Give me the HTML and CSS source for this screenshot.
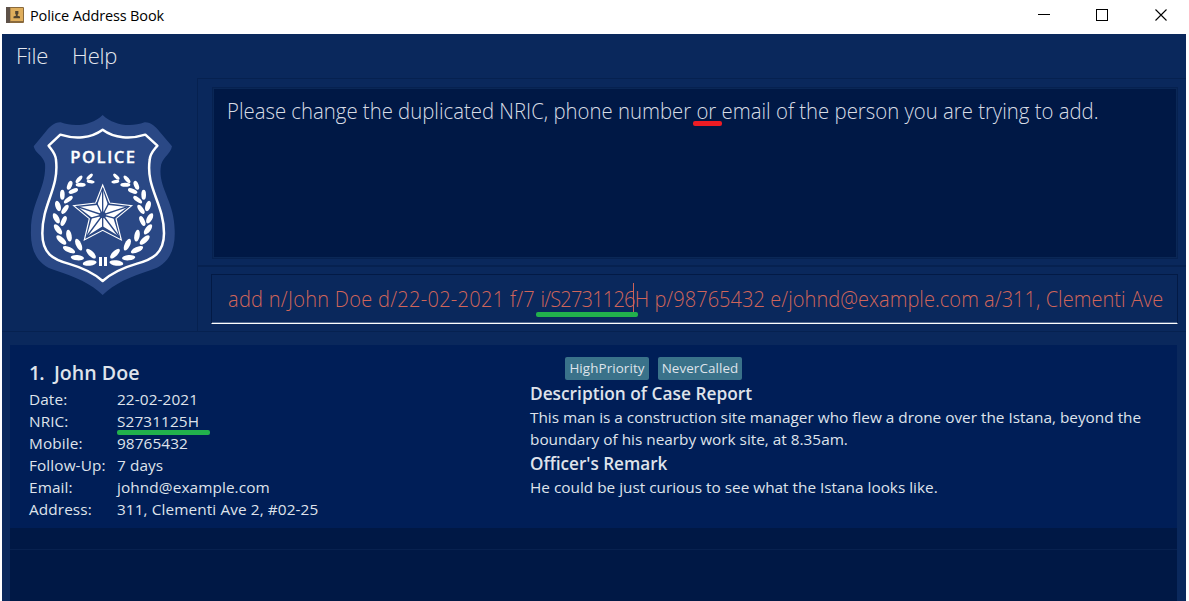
FILE: index.html
```html
<!DOCTYPE html>
<html lang="en">
<head>
<meta charset="utf-8">
<title>Police Address Book</title>
<link rel="stylesheet" href="styles.css">
</head>
<body>
<header class="titlebar">
  <svg class="app-icon" width="18" height="16" viewBox="0 0 18 16">
    <rect x="0" y="0" width="18" height="16" rx="1" fill="#8a6a3c"/>
    <rect x="0" y="0" width="4" height="16" fill="#5d5148"/>
    <rect x="4.5" y="1" width="12.5" height="13" fill="#dfae5c"/>
    <path d="M9.200 4h3.2v2.800l-.8 1v1l2.400.8v1.600H7.500V9.600l2.400-.8v-1l-.7-1z" fill="#51432f"/>
  </svg>
  <span class="title">Police Address Book</span>
  <svg class="controls" width="130" height="14" viewBox="0 0 130 14" fill="none" stroke="#000" shape-rendering="crispEdges">
    <path d="M0 6.500h12"/>
    <rect x="58.500" y="1.500" width="11" height="11"/>
    <path d="M117.500 1.500l11 11M128.500 1.500l-11 11" stroke-width="1.100" shape-rendering="auto"/>
  </svg>
</header>
<main class="window">
  <nav class="menu"><span class="file">File</span><span class="help">Help</span></nav>
  <section class="top">
    <div class="logo">
      <svg width="170" height="200" viewBox="0 0 510 600">
        <path fill="#2a4885" d="M248 30C215 61 165 68 122 52C104 51 88 66 77 80L41 124C46 146 69 151 75 176C80 250 33 290 33 375C30 438 53 480 105 496C165 516 214 536 248 570C282 536 331 516 391 496C444 480 467 438 464 375C463 290 416 250 422 190C422 160 452 149 456 124L419 80C408 66 392 51 374 52C331 68 281 61 248 30Z"/>
        <path fill="none" stroke="#fff" stroke-width="7.500" stroke-linejoin="round" d="M248 74C213 100 165 103 121 89L86 122C95 135 107 145 108 165C118 250 67 295 67 385C67 445 98 463 145 476C190 489 222 505 248 528C274 505 306 489 351 476C398 463 432 445 432 385C432 295 377 250 389 165C390 145 402 135 412 122L376 89C332 103 283 100 248 74Z"/>
        <text class="badge-text" x="248" y="174" text-anchor="middle" textLength="194">POLICE</text>
        <g id="branch" fill="#fff">
          <ellipse cx="209" cy="215" rx="12" ry="5" transform="rotate(-43 209 215)"/>
          <ellipse cx="212" cy="230" rx="12" ry="5" transform="rotate(10 212 230)"/>
          <ellipse cx="177" cy="223" rx="14" ry="6" transform="rotate(-50 177 223)"/>
          <ellipse cx="182" cy="239" rx="15" ry="6" transform="rotate(0 182 239)"/>
          <ellipse cx="149" cy="241" rx="14" ry="7" transform="rotate(-68 149 241)"/>
          <ellipse cx="160" cy="258" rx="15" ry="6.500" transform="rotate(-22 160 258)"/>
          <ellipse cx="127" cy="269" rx="15" ry="7" transform="rotate(-90 127 269)"/>
          <ellipse cx="145" cy="284" rx="16" ry="6.500" transform="rotate(-38 145 284)"/>
          <ellipse cx="114" cy="303" rx="16" ry="8" transform="rotate(72 114 303)"/>
          <ellipse cx="135" cy="313" rx="16" ry="7" transform="rotate(-55 135 313)"/>
          <ellipse cx="109" cy="340" rx="17" ry="8" transform="rotate(62 109 340)"/>
          <ellipse cx="131" cy="348" rx="16" ry="7" transform="rotate(-65 131 348)"/>
          <ellipse cx="114" cy="373" rx="18" ry="8" transform="rotate(53 114 373)"/>
          <ellipse cx="147" cy="392" rx="18" ry="8" transform="rotate(80 147 392)"/>
          <ellipse cx="124" cy="405" rx="19" ry="8" transform="rotate(42 124 405)"/>
          <ellipse cx="147" cy="434" rx="20" ry="8" transform="rotate(25 147 434)"/>
          <ellipse cx="176" cy="419" rx="19" ry="8" transform="rotate(65 176 419)"/>
          <ellipse cx="172" cy="458" rx="20" ry="8" transform="rotate(5 172 458)"/>
          <ellipse cx="213" cy="446" rx="19" ry="8" transform="rotate(45 213 446)"/>
          <ellipse cx="209" cy="474" rx="21" ry="8" transform="rotate(-8 209 474)"/>
          <rect x="237" y="456" width="9" height="27"/>
        </g>
        <use href="#branch" transform="matrix(-1 0 0 1 498 0)"/>
        <path fill="none" stroke="#fff" stroke-width="3.500" d="M248 240L269 294L335 302L288 341L304 405L248 376L193 405L208 341L161 302L227 294Z"/>
        <path fill="#fff" d="M248 253L264 300L322 306L280 338L297 394L248 364L200 394L216 338L174 306L232 300Z"/>
        <path fill="none" stroke="#2a4885" stroke-width="4" d="M248 250V330L325 304M248 330L298 396M248 330L199 396M248 330L170 304M248 330L267 293M248 330L286 340M248 330V370M248 330L210 340M248 330L229 293"/>
        <circle cx="248" cy="330" r="10" fill="#2a4885"/>
      </svg>
    </div>
    <div class="panes">
      <div class="result-pane"><div class="result"><span class="message">Please change the duplicated NRIC, phone number or email of the person you are trying to add.</span></div></div>
      <div class="command-pane"><div class="command"><span class="input"><span class="before">add n/John Doe d/22-02-2021 f/7 </span><span class="nric">i/S2731126</span><span class="after">H p/98765432 e/johnd@example.com a/311, Clementi Ave</span></span></div></div>
    </div>
  </section>
  <section class="list">
    <article class="card">
      <div class="person">
        <h2 class="name"><span class="num">1.</span><span class="fullname">John Doe</span></h2>
        <dl class="fields">
          <dt>Date:</dt><dd>22-02-2021</dd>
          <dt>NRIC:</dt><dd>S2731125H</dd>
          <dt>Mobile:</dt><dd>98765432</dd>
          <dt>Follow-Up:</dt><dd>7 days</dd>
          <dt>Email:</dt><dd>johnd@example.com</dd>
          <dt>Address:</dt><dd>311, Clementi Ave 2, #02-25</dd>
        </dl>
      </div>
      <div class="case">
        <div class="tags"><span class="tag">HighPriority</span><span class="tag">NeverCalled</span></div>
        <h3 class="heading">Description of Case Report</h3>
        <p class="text">This man is a construction site manager who flew a drone over the Istana, beyond the<br>boundary of his nearby work site, at 8.35am.</p>
        <h3 class="heading remark">Officer's Remark</h3>
        <p class="text">He could be just curious to see what the Istana looks like.</p>
      </div>
    </article>
    <div class="empty-row"></div>
  </section>
</main>
<i class="mark mark-or"></i>
<i class="mark mark-input"></i>
<i class="mark mark-nric"></i>
<i class="caret"></i>
</body>
</html>
```
FILE: styles.css
```css
* { box-sizing: border-box; }
body {
  margin: 0;
  width: 1189px;
  height: 601px;
  overflow: hidden;
  position: relative;
  background: #fff;
  font-family: "Open Sans", "Noto Sans", sans-serif;
}
h2, h3, p, dl, dd { margin: 0; }
.titlebar {
  height: 34px;
  display: flex;
  align-items: center;
  padding: 0 21px 4px 6px;
}
.title { margin-left: 6px; padding-top: 2px; font-size: 14.5px; line-height: 20px; letter-spacing: -0.14px; color: #000; white-space: nowrap; }
.controls { margin-left: auto; }
.window {
  width: 1184px;
  height: 567px;
  margin-left: 2px;
  background: #0a285c;
  overflow: hidden;
}
.menu {
  height: 44px;
  padding: 0 14px;
  display: flex;
  gap: 24px;
  font-size: 22px;
  letter-spacing: -0.25px;
  font-weight: 300;
  line-height: 42px;
  color: #e3e7ee;
}
.top { display: flex; height: 254px; border-bottom: 1px solid #062150; }
.logo { width: 195px; padding: 27px 0 0 18px; }
.logo svg { display: block; }
.badge-text { font-family: "Open Sans", sans-serif; font-weight: 600; font-size: 50px; fill: #fff; stroke: #fff; stroke-width: 1px; }
.panes { width: 989px; border-top: 1px solid #062150; border-left: 1px solid #062150; }
.result-pane { height: 188px; padding: 8px 8px 6px 14px; border-bottom: 2px solid #062150; }
.result {
  height: 172px;
  border: 1px solid #062150;
  outline: 1px solid #0a2756;
  outline-offset: -2px;
  background: #001845;
  padding: 7px 14px;
  color: #d8dde5;
  font-size: 21.5px;
  font-weight: 300;
  line-height: 32px;
  white-space: nowrap;
}
.message, .input { display: inline-block; transform-origin: 0 50%; }
.message { transform: scaleX(0.946); }
.input { transform: scaleX(0.931); white-space: pre; }
.before { letter-spacing: 0.3px; }
.nric { letter-spacing: -0.86px; }
.after { letter-spacing: 0.05px; }
.command-pane { height: 65px; padding: 7px 8px 6px 13px; border-bottom: 1px solid #062150; }
.command {
  height: 50px;
  border: 1px solid #031a45;
  border-bottom: 1px solid #fff;
  box-shadow: inset 0 -1px #53698f;
  padding: 0 16px;
  color: #d0655a;
  font-size: 21.5px;
  font-weight: 300;
  line-height: 48px;
  white-space: nowrap;
}
.list { margin: 13px 9px 0 8px; background: #001845; height: 256px; }
.card { height: 183px; background: #001e57; display: flex; padding: 12px 0 0 19px; color: #dfe3eb; }
.person { width: 501px; }
.name { height: 31px; font-size: 19.6px; line-height: 32px; font-weight: 600; display: flex; white-space: nowrap; }
.num { width: 25px; letter-spacing: -1px; }
.fields { display: grid; grid-template-columns: 88px 1fr; grid-auto-rows: 22px; line-height: 22px; font-size: 15.35px; letter-spacing: 0.1px; white-space: nowrap; }
.case { white-space: nowrap; }
.tags { display: flex; gap: 9px; padding-left: 35px; height: 23px; }
.tag { width: 84px; height: 23px; background: #3a728a; border-radius: 2px; font-size: 13.4px; letter-spacing: 0.1px; line-height: 22px; text-align: center; font-weight: 500; }
.heading { font-size: 17.3px; font-weight: 600; line-height: 27px; height: 26px; }
.remark { font-size: 17.1px; }
.text { font-size: 15.35px; line-height: 22px; }
.empty-row { height: 22px; border-bottom: 1px solid #08214f; }
.mark { position: absolute; height: 5px; border-radius: 2px; background: #22b14c; }
.mark-or { left: 693px; top: 121px; width: 29px; background: #ed1c24; }
.mark-input { left: 536px; top: 312px; width: 102px; }
.mark-nric { left: 117px; top: 430px; width: 93px; }
.caret { position: absolute; left: 633px; top: 283px; width: 1px; height: 29px; background: #cc6358; }
```
